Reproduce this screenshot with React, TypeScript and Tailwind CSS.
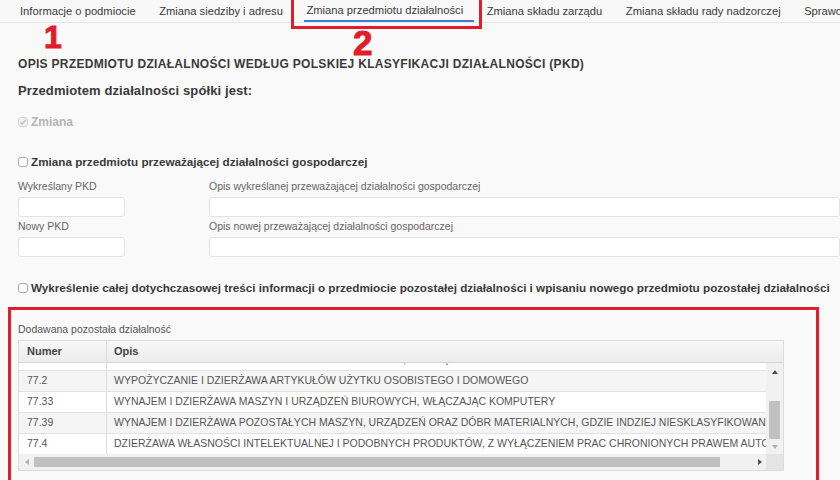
import React from "react";

const tabs = [
  "Informacje o podmiocie",
  "Zmiana siedziby i adresu",
  "Zmiana przedmiotu działalności",
  "Zmiana składu zarządu",
  "Zmiana składu rady nadzorczej",
  "Sprawozdania finansowe",
];

const rows = [
  { num: "77.1", opis: "WYNAJEM I DZIERŻAWA POJAZDÓW SAMOCHODOWYCH, Z WYŁĄCZENIEM MOTOCYKLI", partial: true },
  { num: "77.2", opis: "WYPOŻYCZANIE I DZIERŻAWA ARTYKUŁÓW UŻYTKU OSOBISTEGO I DOMOWEGO" },
  { num: "77.33", opis: "WYNAJEM I DZIERŻAWA MASZYN I URZĄDZEŃ BIUROWYCH, WŁĄCZAJĄC KOMPUTERY" },
  { num: "77.39", opis: "WYNAJEM I DZIERŻAWA POZOSTAŁYCH MASZYN, URZĄDZEŃ ORAZ DÓBR MATERIALNYCH, GDZIE INDZIEJ NIESKLASYFIKOWANE" },
  { num: "77.4", opis: "DZIERŻAWA WŁASNOŚCI INTELEKTUALNEJ I PODOBNYCH PRODUKTÓW, Z WYŁĄCZENIEM PRAC CHRONIONYCH PRAWEM AUTORSKIM" },
];

function Checkbox({ checked, disabled }: { checked?: boolean; disabled?: boolean }) {
  return (
    <span
      className={`mr-[3px] flex h-[10px] w-[10px] shrink-0 items-center justify-center rounded-[3px] border ${
        disabled ? "border-[#d6d6d6] bg-[#f0f0f0]" : "border-[#a9a9a9] bg-white"
      }`}
    >
      {checked && (
        <svg viewBox="0 0 10 10" className="h-[8px] w-[8px]">
          <path d="M1.5 5.2 L4 7.6 L8.6 2.2" fill="none" stroke="#c4c4c4" strokeWidth="1.8" />
        </svg>
      )}
    </span>
  );
}

function Field({ label, wide }: { label: string; wide?: boolean }) {
  return (
    <div className={wide ? "flex-1" : "w-[107px] shrink-0"}>
      <div className="flex h-[14px] items-center text-[10.5px] text-[#666]">{label}</div>
      <div className="mt-[3px] h-[20px] rounded-[3px] border border-[#e3e3e3] bg-white" />
    </div>
  );
}

function Triangle({ dir }: { dir: "up" | "down" | "left" | "right" }) {
  const d = {
    up: "M0 4 L3 0 L6 4 Z",
    down: "M0 0 L6 0 L3 4 Z",
    left: "M4 0 L4 6 L0 3 Z",
    right: "M0 0 L4 3 L0 6 Z",
  }[dir];
  const vert = dir === "up" || dir === "down";
  return (
    <svg viewBox={vert ? "0 0 6 4" : "0 0 4 6"} className={vert ? "h-[4px] w-[6px]" : "h-[6px] w-[4px]"}>
      <path d={d} fill={dir === "down" || dir === "left" ? "#b0b0b0" : "#505050"} />
    </svg>
  );
}

export default function App() {
  return (
    <div className="relative h-[480px] w-[840px] overflow-hidden bg-[#f9f9f9] font-['Liberation_Sans',Arial,sans-serif] text-[#333]">
      {/* tabs */}
      <div className="flex h-[23px] items-stretch gap-[23.5px] whitespace-nowrap border-b border-[#e6e6e6] bg-[#f8f8f8] pl-[20px] text-[11.2px] text-[#3a3a3a]">
        {tabs.map((tab, i) => (
          <div
            key={tab}
            className={`flex items-center ${
              i === 2 ? "-ml-[2px] -mr-[11px] border-b-2 border-[#3d7fd1] pl-[2px] pr-[11px]" : ""
            }`}
          >
            {tab}
          </div>
        ))}
      </div>

      <div className="pl-[18px]">
        <div className="mt-[33px] flex h-[16px] items-center whitespace-nowrap text-[12px] font-bold tracking-[0.3px] text-[#3a3a3a]">
          OPIS PRZEDMIOTU DZIAŁALNOŚCI WEDŁUG POLSKIEJ KLASYFIKACJI DZIAŁALNOŚCI (PKD)
        </div>
        <div className="mt-[11px] flex h-[16px] items-center text-[13px] font-bold tracking-[0.1px] text-[#3a3a3a]">
          Przedmiotem działalności spółki jest:
        </div>
        <div className="mt-[15px] flex h-[16px] items-center text-[12px] font-bold text-[#b4b4b4]">
          <Checkbox checked disabled />
          Zmiana
        </div>
        <div className="mt-[24px] flex h-[16px] items-center text-[11.7px] font-bold text-[#3a3a3a]">
          <Checkbox />
          Zmiana przedmiotu przeważającej działalności gospodarczej
        </div>

        <div className="mt-[10px] flex gap-[84px]">
          <Field label="Wykreślany PKD" />
          <Field label="Opis wykreślanej przeważającej działalności gospodarczej" wide />
        </div>
        <div className="mt-[3px] flex gap-[84px]">
          <Field label="Nowy PKD" />
          <Field label="Opis nowej przeważającej działalności gospodarczej" wide />
        </div>

        <div className="mt-[23px] flex h-[16px] items-center whitespace-nowrap text-[11.7px] font-bold text-[#3a3a3a]">
          <Checkbox />
          Wykreślenie całej dotychczasowej treści informacji o przedmiocie pozostałej działalności i wpisaniu nowego przedmiotu pozostałej działalności
        </div>

        <div className="mt-[27px] flex h-[14px] items-center text-[10.5px] text-[#555]">
          Dodawana pozostała działalność
        </div>

        {/* table */}
        <div className="mt-[3px] w-[766px] border border-[#dcdcdc] bg-white">
          <div className="flex h-[22px] border-b border-[#d6d6d6] bg-gradient-to-b from-[#f8f8f8] to-[#ececec] text-[11px] font-bold text-[#444]">
            <div className="flex w-[88px] items-center border-r border-[#dcdcdc] pl-[8px]">Numer</div>
            <div className="flex items-center pl-[7px]">Opis</div>
          </div>
          <div className="flex h-[91px]">
            <div className="h-full w-[748px] overflow-hidden">
              {rows.map((r) => (
                <div
                  key={r.num}
                  className={`flex h-[21px] whitespace-nowrap border-b border-[#e2e2e2] text-[10.5px] text-[#555] ${
                    r.partial ? "-mt-[13px] bg-white" : r.num === "77.2" || r.num === "77.39" ? "bg-[#f5f5f5]" : "bg-white"
                  }`}
                >
                  <div className="flex w-[88px] shrink-0 items-center border-r border-[#dcdcdc] pl-[8px]">{r.num}</div>
                  <div className="flex items-center pl-[7px]">{r.opis}</div>
                </div>
              ))}
            </div>
            {/* vertical scrollbar */}
            <div className="flex w-[17px] flex-col items-center bg-[#f1f1f1]">
              <div className="flex h-[17px] items-center justify-center">
                <Triangle dir="up" />
              </div>
              <div className="mt-[21px] h-[38px] w-[11px] bg-[#c1c1c1]" />
              <div className="flex flex-1 items-center justify-center">
                <Triangle dir="down" />
              </div>
            </div>
          </div>
          {/* horizontal scrollbar */}
          <div className="flex h-[16px] bg-[#f1f1f1]">
            <div className="flex w-[15px] items-center justify-center">
              <Triangle dir="left" />
            </div>
            <div className="my-[3px] w-[686px] bg-[#c1c1c1]" />
            <div className="flex flex-1 items-center justify-end pr-[4px]">
              <Triangle dir="right" />
            </div>
            <div className="w-[17px] bg-[#e4e4e4]" />
          </div>
        </div>
      </div>

      {/* annotations */}
      <div className="absolute left-[291px] top-[-5px] h-[34px] w-[191px] border-[3px] border-[#e21d2b]" />
      <div className="absolute left-[44px] top-[21px] text-[32px] font-bold leading-none text-[#e21d2b] [-webkit-text-stroke:1px_#e21d2b]">
        1
      </div>
      <div className="absolute left-[353px] top-[25px] text-[35px] font-bold leading-none text-[#e21d2b] [-webkit-text-stroke:1px_#e21d2b]">
        2
      </div>
      <div className="absolute left-[8px] top-[307px] h-[200px] w-[811px] border-[3px] border-[#e21d2b]" />
    </div>
  );
}
